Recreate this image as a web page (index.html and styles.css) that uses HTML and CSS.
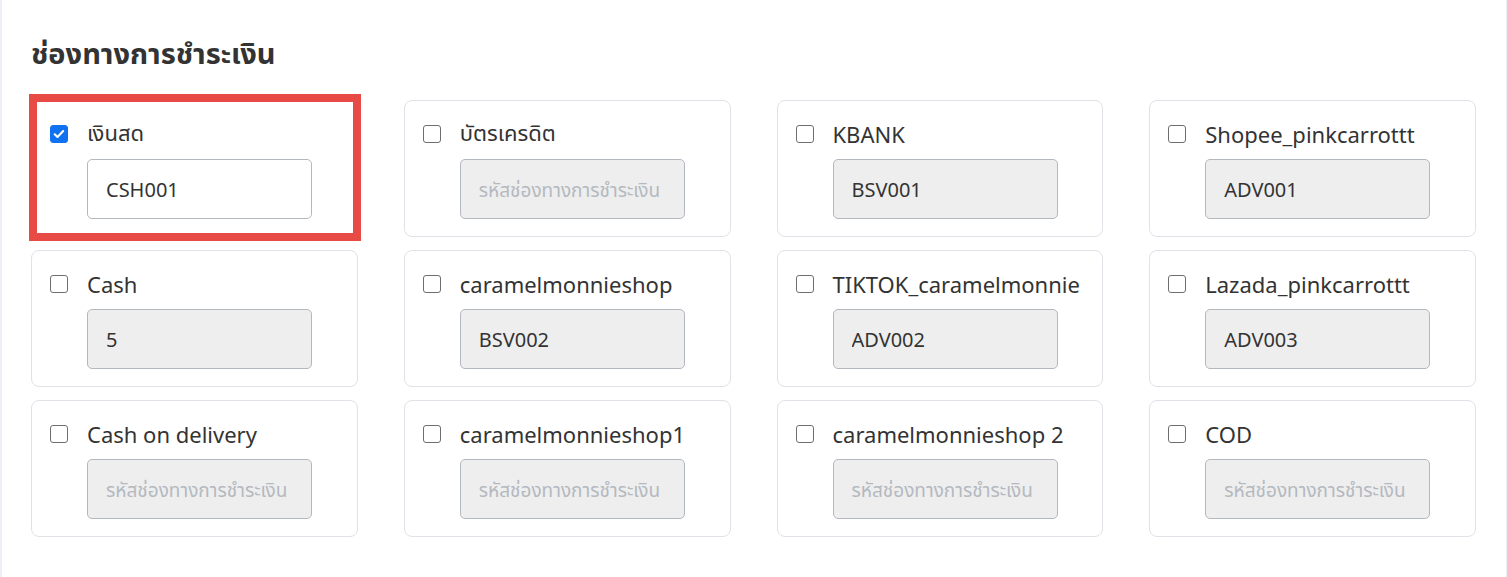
FILE: index.html
```html
<!DOCTYPE html>
<html lang="th">
<head>
<meta charset="utf-8">
<title>ช่องทางการชำระเงิน</title>
<link rel="stylesheet" href="styles.css">
</head>
<body>
<div class="page">
  <h2 class="title">ช่องทางการชำระเงิน</h2>
  <div class="grid">
    <div class="card highlighted">
      <label class="check"><input type="checkbox" checked><span>เงินสด</span></label>
      <input class="code" type="text" value="CSH001">
    </div>
    <div class="card">
      <label class="check"><input type="checkbox"><span>บัตรเครดิต</span></label>
      <input class="code" type="text" placeholder="รหัสช่องทางการชำระเงิน" disabled>
    </div>
    <div class="card">
      <label class="check"><input type="checkbox"><span>KBANK</span></label>
      <input class="code" type="text" value="BSV001" disabled>
    </div>
    <div class="card">
      <label class="check"><input type="checkbox"><span>Shopee_pinkcarrottt</span></label>
      <input class="code" type="text" value="ADV001" disabled>
    </div>

    <div class="card">
      <label class="check"><input type="checkbox"><span>Cash</span></label>
      <input class="code" type="text" value="5" disabled>
    </div>
    <div class="card">
      <label class="check"><input type="checkbox"><span>caramelmonnieshop</span></label>
      <input class="code" type="text" value="BSV002" disabled>
    </div>
    <div class="card">
      <label class="check"><input type="checkbox"><span>TIKTOK_caramelmonnie</span></label>
      <input class="code" type="text" value="ADV002" disabled>
    </div>
    <div class="card">
      <label class="check"><input type="checkbox"><span>Lazada_pinkcarrottt</span></label>
      <input class="code" type="text" value="ADV003" disabled>
    </div>

    <div class="card">
      <label class="check"><input type="checkbox"><span>Cash on delivery</span></label>
      <input class="code" type="text" placeholder="รหัสช่องทางการชำระเงิน" disabled>
    </div>
    <div class="card">
      <label class="check"><input type="checkbox"><span>caramelmonnieshop1</span></label>
      <input class="code" type="text" placeholder="รหัสช่องทางการชำระเงิน" disabled>
    </div>
    <div class="card">
      <label class="check"><input type="checkbox"><span>caramelmonnieshop 2</span></label>
      <input class="code" type="text" placeholder="รหัสช่องทางการชำระเงิน" disabled>
    </div>
    <div class="card">
      <label class="check"><input type="checkbox"><span>COD</span></label>
      <input class="code" type="text" placeholder="รหัสช่องทางการชำระเงิน" disabled>
    </div>
  </div>
</div>
</body>
</html>
```

FILE: styles.css
```css
* { box-sizing: border-box; }
html, body { margin: 0; padding: 0; background: #ffffff; }
body {
  font-family: "Noto Sans", "Noto Sans Thai", "Liberation Sans", sans-serif;
  color: #333333;
}
.page {
  width: 1507px;
  height: 577px;
  border-left: 2px solid #eef0f7;
  border-right: 1px solid #eef0f7;
  padding: 34px 30px 0 29px;
}
.title {
  margin: 0 0 28px 0;
  font-size: 29px;
  line-height: 38px;
  font-weight: 700;
  color: #333333;
}
.grid {
  display: grid;
  grid-template-columns: repeat(4, 1fr);
  column-gap: 46px;
  row-gap: 13px;
}
.card {
  position: relative;
  border: 1px solid #e0e2e8;
  border-radius: 8px;
  background: #fff;
  padding: 18px 18px 17px 18px;
  display: flex;
  flex-direction: column;
  align-items: flex-start;
}
.card.highlighted::after {
  content: "";
  position: absolute;
  top: -7px;
  left: -3px;
  right: -4px;
  bottom: -5px;
  border: 8px solid #e84b45;
  pointer-events: none;
}
.check {
  display: flex;
  align-items: center;
  height: 30px;
  gap: 19px;
  font-size: 22px;
  color: #333333;
}
.check input {
  -webkit-appearance: none;
  appearance: none;
  width: 18px;
  height: 18px;
  margin: 0;
  border: 1.6px solid #6e6e6e;
  border-radius: 3px;
  background: #ffffff;
  flex: none;
}
.check input:checked {
  border-color: #1072f0;
  background-color: #1072f0;
  background-image: url("data:image/svg+xml,%3Csvg xmlns='http://www.w3.org/2000/svg' viewBox='0 0 18 18'%3E%3Cpath d='M4.2 9.3l3.1 3 6.4-6.6' fill='none' stroke='%23ffffff' stroke-width='2.4' stroke-linecap='round' stroke-linejoin='round'/%3E%3C/svg%3E");
  background-size: 100% 100%;
}
.code {
  margin: 10px 0 0 37px;
  width: 225px;
  height: 60px;
  border: 1px solid #b3b8bf;
  border-radius: 5px;
  background: #ffffff;
  padding: 0 16px 0 18px;
  font-family: inherit;
  font-size: 20px;
  color: #333333;
}
.code:disabled {
  background: #eeeeee;
  color: #333333;
}
.code::placeholder {
  font-size: 19px;
  color: #b4b9c0;
  opacity: 1;
}
```
